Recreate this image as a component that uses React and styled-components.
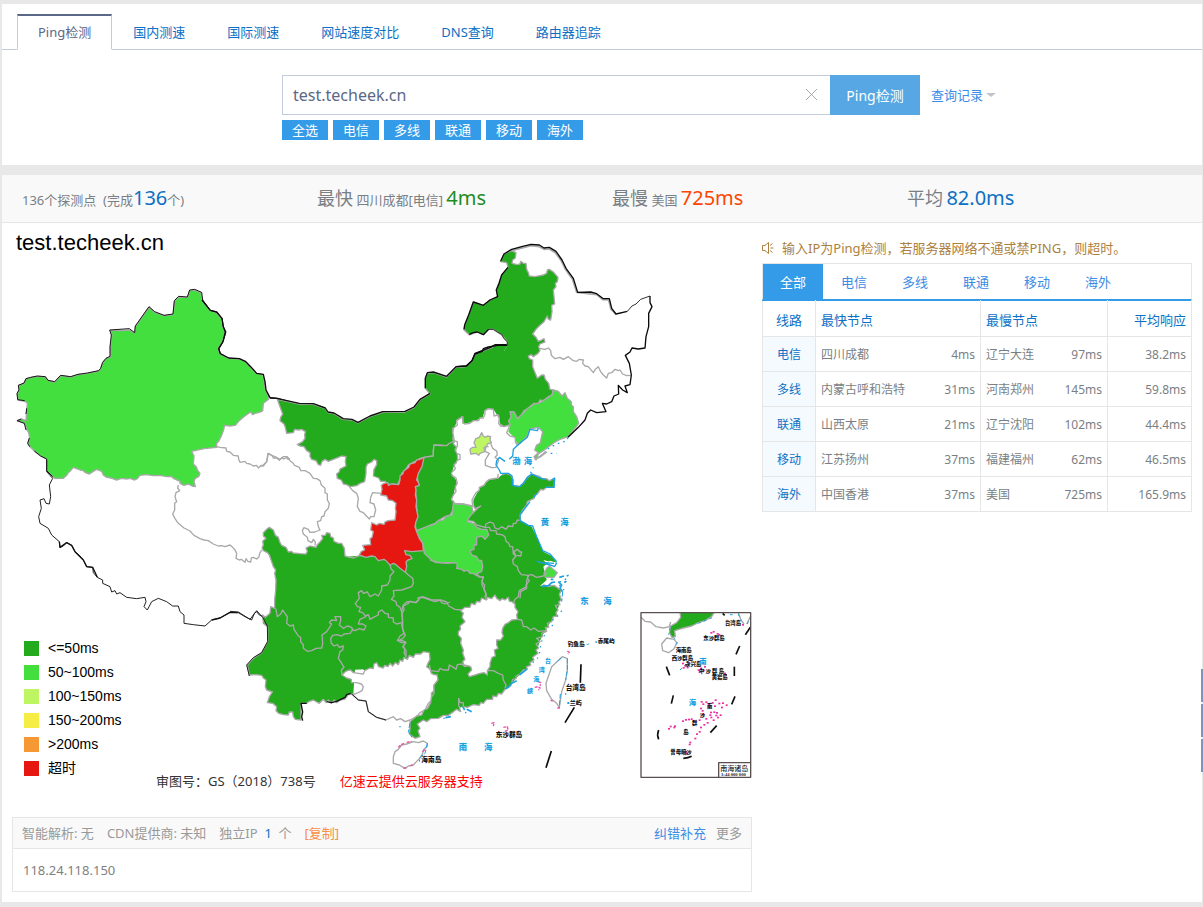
import React, { useState } from "react";
import styled, { createGlobalStyle } from "styled-components";

const GlobalStyle = createGlobalStyle`
  * {
    box-sizing: border-box;
  }
  body {
    margin: 0;
    background: #e8e8e8;
    color: #7a7f85;
    font-family: "Noto Sans", "Noto Sans CJK SC", sans-serif;
    font-size: 13px;
    line-height: 20px;
  }
  button, input {
    font-family: inherit;
  }
  a {
    text-decoration: none;
  }
`;

const Page = styled.div`
  display: flex;
  flex-direction: column;
  gap: 10px;
  padding: 4px 1px 5px 2px;
`;

const Panel = styled.section`
  background: #fff;
`;

const Nav = styled.nav`
  display: flex;
  padding: 10px 15px 0;
  border-bottom: 1px solid #c3cbdc;
`;

const NavTab = styled.a`
  height: 36px;
  margin-bottom: -1px;
  padding: 6px 20px 0;
  border: 1px solid ${({ $active }) => ($active ? "#c3cbdc" : "transparent")};
  border-top: 2px solid ${({ $active }) => ($active ? "#5b6887" : "transparent")};
  border-bottom-color: ${({ $active }) => ($active ? "#fff" : "transparent")};
  color: ${({ $active }) => ($active ? "#5b6887" : "#0c70c4")};
  white-space: nowrap;
`;

const SearchArea = styled.div`
  display: grid;
  grid-template-columns: 1fr minmax(0, 638px) 1fr;
  padding: 25px 2px 25px 0;
`;

const SearchForm = styled.form`
  grid-column: 2;
`;

const SearchBar = styled.div`
  display: flex;
  height: 40px;
`;

const InputBox = styled.div`
  display: flex;
  flex: 1;
  align-items: center;
  border: 1px solid #c3cbdc;
  border-right: 0;
`;

const HostInput = styled.input`
  flex: 1;
  min-width: 0;
  padding: 0 10px;
  border: 0;
  outline: 0;
  background: none;
  color: #5b6887;
  font-size: 16px;
`;

const ClearButton = styled.button`
  display: flex;
  margin-right: 12px;
  padding: 0 0 2px;
  border: 0;
  background: none;
`;

const SubmitButton = styled.button`
  width: 90px;
  padding: 0;
  border: 0;
  background: #56a7e3;
  color: #fff;
  font-size: 14px;
`;

const LineRow = styled.div`
  display: flex;
  gap: 5px;
  padding: 5px 0 0;
`;

const LineButton = styled.button`
  width: 46px;
  height: 20px;
  padding: 0;
  border: 0;
  background: #349be9;
  color: #fff;
  font-size: 13px;
  line-height: 18px;
`;

const HistoryLink = styled.a`
  display: flex;
  align-items: center;
  gap: 3px;
  height: 40px;
  padding-left: 11px;
  color: #3c8ce6;
`;

const Caret = styled.span`
  border: 5px solid transparent;
  border-top: 4px solid #c0c4cc;
  border-bottom: 0;
`;

const Stats = styled.div`
  display: grid;
  grid-template-columns: repeat(4, 1fr);
  height: 48px;
  padding-left: 20px;
  border-bottom: 1px solid #e6e6e6;
  background: #f9f9f9;
  line-height: 46px;
`;

const StatName = styled.span`
  font-size: 18px;
`;

const StatValue = styled.span`
  color: ${({ $color }) => $color};
  font-size: 20px;
`;

const Columns = styled.div`
  display: grid;
  grid-template-columns: 740fr 430fr;
  gap: 10px;
  align-items: start;
  padding: 0 10px 10px;
`;

const MapBox = styled.div`
  position: relative;

  svg {
    display: block;
    width: 100%;
  }
`;

const MapTitle = styled.h1`
  position: absolute;
  top: 8px;
  left: 4px;
  margin: 0;
  color: #000;
  font: 22px/24px "Liberation Sans", Arial, sans-serif;
`;

const Legend = styled.ul`
  position: absolute;
  bottom: 37px;
  left: 12px;
  margin: 0;
  padding: 0;
  list-style: none;
  color: #000;
  font: 14px/24px "Liberation Sans", "Noto Sans CJK SC", sans-serif;
`;

const LegendItem = styled.li`
  display: flex;
  align-items: center;
  gap: 9px;
  height: 24px;

  &::before {
    content: "";
    width: 15px;
    height: 15px;
    background: ${({ $color }) => $color};
  }
`;

const MapNote = styled.div`
  position: absolute;
  bottom: 26px;
  left: 144px;
  display: flex;
  gap: 24px;
  color: #333;

  a {
    color: #f00;
  }
`;

const IpBox = styled.div`
  border: 1px solid #e6e6e6;
`;

const IpHead = styled.div`
  display: flex;
  gap: 13px;
  padding: 5px 9px;
  border-bottom: 1px solid #e6e6e6;
  background: #f9f9f9;
  color: #999;

  b {
    color: #0c70c4;
    font-weight: 400;
  }
`;

const CopyButton = styled.button`
  padding: 0;
  border: 0;
  background: none;
  color: #f78f47;
  font-size: 13px;
  line-height: 18px;
`;

const IpLinks = styled.div`
  display: flex;
  gap: 10px;
  margin-left: auto;

  a {
    color: #3c8ce6;
  }
  a + a {
    color: #999;
  }
`;

const IpAddress = styled.div`
  padding: 11px 10px;
  color: #7f7f7f;
`;

const Notice = styled.p`
  display: flex;
  align-items: center;
  gap: 8px;
  margin: 0;
  padding: 15px 0 5px;
  color: #ac8040;
`;

const LineTabs = styled.div`
  display: flex;
  gap: 1px;
  border: 1px solid #e6e6e6;
  border-bottom: 1px solid #349be9;
`;

const LineTab = styled.button`
  width: 60px;
  height: 35px;
  padding: 0;
  border: 0;
  background: ${({ $active }) => ($active ? "#349be9" : "none")};
  color: ${({ $active }) => ($active ? "#fff" : "#3c8ce6")};
  font-size: 13px;
`;

const Table = styled.table`
  width: 100%;
  border-collapse: collapse;
  table-layout: fixed;
  font-size: 12px;

  th, td {
    height: 35px;
    padding: 2px 5px 0;
    border: 1px solid #e6e6e6;
    font-weight: 400;
    text-align: left;
  }
  thead th {
    height: 36px;
    border-top-color: #349be9;
    color: #0c70c4;
    font-size: 13px;
  }
  tr > th:first-child {
    text-align: center;
  }
  tbody th {
    background: #f5faff;
    color: #0c70c4;
  }
  tr > :last-child {
    text-align: right;
  }
`;

const Node = styled.div`
  display: flex;
  justify-content: space-between;
`;

const SideTools = styled.aside`
  position: fixed;
  top: 669px;
  right: 0;
  display: grid;
  gap: 2px;
`;

const SideTool = styled.span`
  width: 2px;
  height: 33px;
  background: #8093bd;
`;

const GREEN = "#24aa1d";
const LIGHT = "#43df3f";

const navTabs = ["Ping检测", "国内测速", "国际测速", "网站速度对比", "DNS查询", "路由器追踪"];
const lines = ["电信", "多线", "联通", "移动", "海外"];

const legend = [
  [GREEN, "<=50ms"],
  [LIGHT, "50~100ms"],
  ["#bef663", "100~150ms"],
  ["#f6ed44", "150~200ms"],
  ["#f69833", ">200ms"],
  ["#e61610", "超时"],
];

const rows = [
  ["电信", "四川成都", "4ms", "辽宁大连", "97ms", "38.2ms"],
  ["多线", "内蒙古呼和浩特", "31ms", "河南郑州", "145ms", "59.8ms"],
  ["联通", "山西太原", "21ms", "辽宁沈阳", "102ms", "44.4ms"],
  ["移动", "江苏扬州", "37ms", "福建福州", "62ms", "46.5ms"],
  ["海外", "中国香港", "37ms", "美国", "725ms", "165.9ms"],
];

// [x, y] of the small reefs in the south sea inset
const reefs = [
  [243, 98], [250, 95], [262, 101], [267, 104], [338, 74], [158, 190], [165, 197], [172, 202], [177, 188],
  [160, 203], [205, 210], [212, 205], [220, 211], [208, 216], [224, 200], [284, 220], [287, 224], [214, 305],
  [219, 312], [212, 325], [217, 332], [228, 306], [236, 322], [247, 308], [256, 300], [254, 318], [267, 310],
  [278, 309], [289, 315], [275, 322], [242, 337], [252, 336], [260, 338], [271, 345], [258, 346], [240, 345],
  [250, 360], [263, 352], [228, 356], [232, 368], [222, 374], [212, 382], [208, 360], [184, 357], [176, 358],
  [167, 359], [158, 363], [196, 365], [134, 378], [132, 382], [121, 379], [116, 386], [208, 395], [200, 402],
  [195, 415], [180, 427], [178, 433], [167, 455], [170, 461], [218, 342], [235, 312], [243, 352],
];

const southDashes = [
  "M361 82L346 104", "M329 138L318 163", "M313 200V228", "M109 200L119 226", "M130 286L124 311",
  "M315 289L305 313", "M260 377L241 398", "M86 390Q80 404 86 418", "M160 475Q175 474 185 469",
];

function ChinaMap() {
  return (
    <svg viewBox="36 669 2220 1782" role="img" aria-label="Ping" fill="none" stroke="#a9a9a9" strokeWidth="4" strokeLinejoin="round">
      {/* 新疆 */}
      <g transform="translate(0 690)">
        <path fill={LIGHT} d="M165 745L158 740 140 722 140 687 122 678 103 663 90 650 84 640 89 624 86 608 80 598 75 580 52 572 64 567 78 572 80 540 82 520 74 514 54 510 52 490 58 480 56 466 72 460 78 447 92 443 112 439 136 441 144 452 164 456 182 437 212 441 234 434 262 430 296 423 302 416 308 398 318 386 332 380 331 350 336 315 331 301 360 302 388 300 404 309 406 290 447 232 464 247 492 257 519 254 524 212 536 201 562 203 569 182 582 180 603 188 606 210 630 241 648 248 664 265 668 290 676 306 667 335 655 356 659 371 686 385 718 387 734 394 752 412 768 430 788 434 793 455 796 480 806 500 806 508 790 520 788 543 776 548 765 550 758 554 752 546 740 554 730 562 718 572 706 586 690 588 674 586 670 602 664 618 656 634 650 640 650 652 612 656 575 664 582 678 580 702 590 712 592 720 600 730 596 740 586 745 582 754 586 770 576 768 565 762 552 766 540 760 540 754 520 745 514 739 500 740 480 736 460 737 440 734 420 736 412 746 404 750 390 745 380 747 364 745 350 750 336 745 318 741 310 735 305 724 290 718 280 724 268 732 256 728 250 722 240 720 230 716 220 712 212 722 205 728 200 736 190 745Z" />
        <path d="M650 650L660 652 678 654 680 664 690 666 700 676 715 678 716 688 720 697 735 694 740 700 750 702 760 708 770 706 775 714 784 706 790 708 800 695 802 682 805 670 816 676 820 684 830 684 838 691 846 682 850 687 860 683 864 688 870 685" />
        <path stroke="#151515" strokeWidth="3" d="M158 740L140 722 140 687 122 678 103 663 M89 650L83 640 88 624 M78 600L73 580 51 572 64 567 M78 552L80 535 M74 512L53 509 51 490 57 480 55 466 72 459 78 446 92 442 112 438 136 440 144 451 164 455 182 436 212 440 234 433 262 429 296 422 302 415 308 397 318 385 330 379 330 350 334 315 329 300 388 296 404 308 406 288 447 230 464 245 492 256 519 252 523 212 536 199 562 201 569 180 584 178 605 187 608 210 631 241 650 246 666 265 670 290 678 306 669 335 657 356 661 371" />
        <path stroke="#0a0a0a" strokeWidth="4" d="M606 210L631 241 650 246 666 265 670 290 676 306 669 335 656 356 661 371 686 384 718 386 736 394 752 410 770 430 790 433 795 455 798 480 810 503 832 505 870 516" />
      </g>

      {/* 西藏 青海 */}
      <g transform="translate(0 1380)">
        <path d="M535 75L533 84 539 92 528 98 525 110 530 125 524 130 524 150 518 162 525 176 535 190 552 204 570 213 582 226 600 236 612 240 625 242 640 252 655 258 665 257 675 260 690 255 698 262 705 270 710 280 708 295 718 300 724 298 735 307 738 296 744 304 752 306 754 294 760 292 770 297 777 290 779 280 785 270" />
        <path stroke="#222" strokeWidth="3" d="M140 0V35L158 55 148 75 152 110 148 132 138 130 132 116 120 120 124 145 116 170 120 190 145 205 155 225 178 245 180 262 190 258 200 248 215 256 225 275 240 288 250 300 260 320 278 322 280 338 292 352 308 360 308 370 330 380 335 396 345 392 350 402 360 398 380 412 410 416 435 412 438 425 432 440 442 450 455 425 475 415 500 425 518 438 535 438 540 455 552 465 552 490 580 494 615 498 635 480 660 474 690 457 715 458 735 470 755 480 763 460 770 455 778 465 790 470 790 490 803 495" />
        <path stroke="#111" strokeWidth="4" d="M178 245L180 262 200 248 215 256 225 275 250 300 260 320 278 322 292 352 M635 480L660 474 690 457 715 458" />
      </g>

      {/* 内蒙古 */}
      <g transform="translate(780 1020)">
        <path stroke={GREEN} strokeWidth="14" d="M734 34L590 290" />
        <path fill={GREEN} d="M578 305L568 314 558 317 540 315 522 315 520 330 520 348 505 350 492 352 480 355 470 362 458 368 445 375 436 390 425 400 420 418 412 435 398 432 385 434 375 424 362 424 356 414 340 408 342 388 350 374 350 362 342 358 335 366 322 372 318 382 318 400 314 425 300 430 290 437 270 440 260 434 250 432 244 420 232 415 230 402 238 395 240 387 250 382 258 378 256 365 258 350 245 348 235 352 220 358 205 364 195 358 186 364 182 376 175 374 168 362 155 358 150 350 150 338 140 332 132 320 120 318 112 314 128 305 135 295 134 285 136 275 125 268 115 270 104 268 100 278 80 280 76 262 72 252 60 242 62 232 68 222 60 200 52 178 118 192 160 193 196 206 204 218 222 221 250 238 276 240 294 249 330 230 368 217 435 216 462 203 480 180 510 162 496 145 496 115 502 100 520 98 560 111 588 82 618 80 636 64 645 42 664 35 690 25 706 16 742 16" />
        <path stroke="#111" strokeWidth="4" d="M30 174L50 175 118 190 160 191 196 204 204 216 222 219 250 236 276 238 294 247 330 228 368 215 435 214 462 201 480 178 510 160 M496 145L496 115 502 98 520 96 560 109 588 80 618 78 636 62 645 40 664 33 690 23 706 14 742 14" />
      </g>
      <g transform="translate(1290 690)">
        <path fill={GREEN} d="M232 346L232 335 215 315 190 298 176 298 160 314 142 306 118 315 102 300 104 285 116 255 130 216 160 226 180 210 203 200 199 180 215 135 234 112 230 98 212 95 222 72 245 62 258 68 256 84 248 90 246 100 262 104 270 102 272 94 280 100 288 100 290 118 295 128 298 138 315 140 340 135 350 130 352 120 358 118 370 126 384 142 382 155 376 160 378 170 370 180 372 200 374 222 365 226 366 245 362 270 355 268 352 258 342 275 330 286 318 298 308 312 318 322 325 334 335 330 342 326 345 336 330 342 326 350 330 362 324 370 310 380 304 374 295 378 298 386 308 390 308 410 314 425 322 445 335 435 342 435 346 448 356 460 360 478 370 480 366 495 355 500 340 512 330 510 325 520 312 520 302 528 290 538 282 542 274 555 262 566 252 546 242 545 242 565 236 572 240 585 222 590 214 584 208 582 205 575 207 562 205 555 192 558 190 548 190 538 175 536 165 542 165 550 160 564 150 564 146 572 130 572 120 580 104 582 99 578 98 560 90 565 80 572 82 585 75 592 68 595 72 612 68 625 72 635" />
        <path fill={LIGHT} d="M370 480L385 484 396 498 405 488 412 505 424 515 424 525 430 530 430 545 440 560 446 580 434 596 414 620 390 628 372 638 350 655 325 672 318 690 312 680 325 668 314 660 320 645 330 640 338 605 325 592 300 597 290 620 270 640 258 642 255 622 240 618 230 607 236 594 240 585 237 572 243 562 240 545 252 546 262 566 274 555 290 538 312 522 325 520 340 512 366 495Z" />
        <path d="M330 355L345 358 355 354 362 362 364 376 375 386 390 382 400 388 415 380 430 392 440 394 448 388 460 390 458 400 465 408 475 410 490 428 496 418 505 410 512 425 520 435 530 444 535 430 545 428 555 418 565 422 570 420 578 432 590 437 602 436" />
        <path stroke="#a9a9a9" strokeWidth="5" d="M245 62L280 53 303 47 328 50 342 58 358 57 376 68 394 93 406 118 427 147 440 187 500 194 518 209 536 210 543 238 558 253" />
        <path stroke="#0a0a0a" strokeWidth="4" d="M203 346L175 351 160 356 157 364 135 372 126 392 110 408 80 410 M232 346L203 346 M118 313L130 308 142 306 160 314 176 298 M102 298L104 285 116 255 130 216 160 226 180 210 203 200 199 180 208 158 215 135 234 112 M212 94L222 72 245 58 278 49 303 43 328 45 342 54 358 52 378 64 396 90 408 115 430 145 443 187 482 186 500 191 520 206 538 206 545 235 558 252 592 244" />
        <path stroke="#333" strokeWidth="3" d="M176 298L190 298 202 306 215 313 222 326 232 335 232 346 M592 244L606 228 618 222 632 208 660 198" />
        <path stroke="#0a0a0a" strokeWidth="4" d="M660 198L660 218 666 230 656 250 656 290 648 320 645 354 625 357 606 354 600 366 586 376 598 400 604 435 600 464 585 468 592 488 578 480 565 466 566 492 552 498 545 515 530 522 517 520 528 545 500 548 482 540 472 550 465 570 445 592 414 622" />
      </g>

      {/* 甘肃 宁夏 */}
      <g transform="translate(780 1020)">
        <path d="M0 380L10 375 20 365 22 355 24 340 32 345 45 350 60 358 70 350 82 350 90 362 98 368 104 376 118 382 122 392 135 392 150 400 160 415 170 416 180 422 184 435 195 445 195 458 202 462 202 480 208 490 205 505 195 515 192 528 185 530 182 542 172 545 175 560 180 570 165 576 150 577 145 568 132 563 127 572 130 582 142 592 144 602 155 608 160 598 166 606 165 616 M268 440L278 452 290 460 295 475 292 500 300 514 310 518 328 537 332 530 342 530 347 510 342 492 330 488 332 472 338 458 362 460" />
      </g>

      {/* 南方各省 */}
      <g stroke="none" fill={GREEN}>
        <path transform="translate(690 1560)" d="M350 110L600 90V440L350 450Z" />
        <path transform="translate(1140 1710)" d="M-50 -45L100 -60 130 -140 310 -140 420 -150 455 -130 475 -90 490 -55 515 -42 530 -22 510 -28 490 -10 500 30 480 48 510 44 540 60 536 110 515 150 485 200 468 245 440 290 395 340 350 374 260 405 172 440 100 300 -50 300Z" />
      </g>
      <g transform="translate(690 1560)">
        <path fill={GREEN} d="M398 105L385 108 372 114 358 112 345 108 343 85 335 70 325 70 312 64 310 54 302 50 300 40 290 38 286 46 275 46 278 56 270 66 262 74 258 82 240 78 228 84 232 94 228 102 210 101 190 99 184 94 175 96 168 82 155 76 150 68 145 52 136 46 130 30 118 22 110 28 100 38 100 48 108 55 98 64 100 74 96 84 100 92 112 98 118 105 125 125 130 140 137 150 134 160 138 180 137 210 134 240 134 265 122 260 120 280 106 292 98 285 102 312 113 320 113 365 95 398 70 415 52 435 58 465 78 464 95 466 100 474 108 480 106 500 110 510 127 516 118 530 112 548 128 550 140 560 138 572 146 580 160 584 175 585 178 576 188 576 190 590 196 598 213 600 213 550 230 550 238 544 250 540 260 546 268 550 280 538 288 548 295 540 304 550 312 540 320 548 330 540 345 537 355 524 370 522" />
        <path fill="#fff" d="M336 465L345 456 352 452 362 450 370 458 385 460 400 462 404 452 420 444 430 446 432 432 440 428 446 440 460 444 464 436 474 440 480 430 488 438 496 428 505 434 510 420 518 424 522 412 532 418 538 406 550 412 556 402 572 402 580 395 598 398 600 418 594 430 590 440 600 448 604 460 612 464 622 465 624 480 612 496 612 512 604 520 605 540 594 552 585 570 570 578 560 590 540 600 525 605 512 596 500 600 490 590 468 600 440 592 415 575 408 543 385 540 368 524 385 518 396 512 400 500 394 492 380 488 364 488 364 478 350 474Z" />
        <path stroke="#222" strokeWidth="3" d="M0 274L25 276 60 298 80 272 98 292 112 318 113 365 95 398 70 413 50 435 58 468 M365 522L385 540 408 543 415 575 440 592 468 600" />
        <path stroke="#111" strokeWidth="4" d="M218 602L215 590 218 576 213 550 230 550 M290 545L304 548 320 544 345 532 350 524 362 520" />
        <path d="M137 265L142 290 152 282 158 270 166 282 172 290 170 310 180 318 190 315 192 328 200 340 205 348 212 352 212 365 220 375 220 385 232 394 245 392 258 385 275 384 278 370 276 345 290 335 300 320 305 312 298 308 305 300 320 302 315 290 332 290 332 302 328 315 340 325 352 318 365 322 368 330 360 340 342 342 335 348 320 344 308 346 302 356 304 370 312 378 322 374 328 382 340 378 338 390 330 395 325 415 332 425 342 442 334 450 336 465" />
        <path d="M480 135L484 148 492 155 480 168 480 180 472 195 455 198 455 210 445 228 435 222 420 230 412 216 400 220 395 212 385 218 388 235 376 250 382 260 392 262 387 275 398 278 408 290 390 298 385 312 398 312 408 318 402 330 388 326 375 332 365 328 M405 288L415 284 420 298 430 292 445 285 445 276 455 270 465 280 475 282 475 292 490 294 490 306 500 312 515 308" />
        <path d="M525 155L535 165 548 175 550 190 545 200 515 210 490 212 492 228 484 238 498 245 500 255 510 262 515 275 518 310 518 330 526 345 518 356 505 362 514 368 526 366 520 378 525 388 522 398 528 410 M515 275L518 262 520 255 530 246 540 244 555 248 565 240 564 234 578 230 605 240 630 240 635 248 645 252 660 246" />
        <path d="M490 710L490 730 508 735 525 745 535 738 550 735 562 722 572 712 578 700 580 690 592 678 592 670 580 663 565 668 550 665 530 672 515 675 505 688 495 695Z" />
      </g>
      <g transform="translate(1140 1710)">
        <path fill="#fff" stroke="none" d="M528 -20L490 -30 505 -14 500 8 512 22 485 48 515 44 560 62 600 0 560 -30Z" />
        <path fill={GREEN} d="M490 44L505 50 522 46 545 62 538 72 544 90 536 96 540 104 526 106 534 120 528 128 532 138 520 140 515 155 502 160 506 172 496 172 500 184 485 190 488 200 470 205 480 215 468 222 476 234 468 240 474 250 458 262 462 270 450 278 452 286 440 290 442 298 430 300 420 312 408 318 408 326 398 328 392 348 375 358 365 372 355 370 350 380 338 378 338 388 320 388 310 400 302 398 298 406 280 404 262 412 250 410 250 398 240 398 236 385 236 405 242 425 230 418 222 424 205 436 190 436 175 445 152 446 140 455 130 450 112 462 120 475 114 482 120 500 105 505 88 492 90 475 90 455 110 438 125 435 132 420 142 416 152 398 154 382 162 370 162 345 174 330 172 318" />
        <path fill="#fff" d="M345 75L350 85 360 92 366 86 375 90 385 82 388 94 395 95 405 102 405 112 414 125 410 135 412 148 395 150 385 158 375 163 368 175 366 188 370 198 362 210 350 210 350 225 354 235 343 240 346 258 336 262 330 280 330 290 322 302 322 315 312 308 300 310 285 315 268 320 264 312 275 300 272 290 262 287 252 285 248 275 255 268 248 250 250 240 242 220 244 205 235 195 235 185 242 178 240 168 255 155 246 142 250 130 242 122 255 112 270 112 274 100 285 104 290 94 300 96 305 84 318 90 322 82 335 86Z" />
        <path d="M65 165L68 150 66 130 72 120 70 108 85 100 90 94 108 98 116 90 118 84 128 82 145 88 165 95 182 90 200 96 206 108 225 118 245 120 M65 165L72 190 60 198 52 212 68 212 78 218 68 230 78 242 78 260 M148 285L152 302 175 305 180 295 190 300 205 300 208 285 220 292 228 298 232 284 245 282 255 290 262 288 M290 12L300 22 310 20 306 35 306 45 314 60 320 80" />
        <path d="M400 100L405 88 415 80 418 62 440 50 440 32 446 15 M412 148L425 150 430 170 440 170 452 180 462 174 475 184 500 182 M322 302L340 302 355 310 368 315 370 330 378 345 375 355" />
        <path fill={LIGHT} d="M500 -5L508 -12 532 8 522 22 496 22 492 10Z" />
        <path fill="#fff" d="M547 260L562 266 562 300 557 330 545 365 541 392 538 412 530 400 515 388 500 362 498 340 515 290Z" />
        <path stroke="#1ba1e2" strokeWidth="3" strokeDasharray="14 5" d="M562 266L562 300 557 330 M541 372L538 412 M545 262L530 276 M142 520L135 550 120 562 118 575 M90 460L85 485 96 502 M548 66L545 95" />
        <path stroke="#1ba1e2" strokeWidth="4" strokeDasharray="4 14" d="M545 122L530 142 518 150 517 170 M494 195L486 210 482 225 477 260 473 264 453 283 M190 445L212 440 M255 428L272 426 M58 470H63 M555 372H560" />
        <path stroke="#1ba1e2" strokeWidth="5" d="M375 356L385 352 395 340 410 332 M418 315L440 298 M196 443L212 440 M248 410L254 420 M260 418L275 425 M485 49L505 47 515 38 525 36 M538 22L552 18 M535 35L545 45 540 55 548 65 M552 36H558 M512 28H520 M560 18L566 16" />
        <path stroke="#ee4fa6" strokeWidth="4" d="M334 460L342 458 340 468 M370 472L382 470 384 480 374 484 M562 243L568 247 564 252 M475 335L482 338 480 348 M464 352L474 350 482 355 M475 360L478 358 M512 390L518 394 M532 414L540 414 M55 532L62 525 72 520 M80 517L95 514 M128 545L135 538 M92 588L98 584 M70 594H80" strokeDasharray="9 3" />
        <path stroke="#0a0a0a" strokeWidth="5" d="M603 283L601 338 M583 412L555 458 M514 543L498 593" />
      </g>

      {/* 山西 陕西 河南 */}
      <g transform="translate(780 1020)">
        <path fill={GREEN} d="M492 352L520 348 520 335 522 315 540 317 560 317 568 310 584 303 580 312 590 322 600 324 598 335 592 345 594 370 582 382 585 394 575 398 578 408 590 418 590 435 584 450 585 462 578 472 582 490 578 512 570 526 555 530 535 542 525 550 510 556 490 566 468 572 465 545 472 530 470 500 468 470 466 440 476 436 470 400 480 385Z" />
        <path fill={LIGHT} d="M580 490L576 525 560 528 550 540 535 542 525 552 510 556 470 572 470 582 490 612 493 640 512 658 525 666 560 670 585 668 592 672 590 685 605 688 612 694 622 690 630 700 640 700 650 707 655 698 665 695 668 680 665 662 655 660 650 650 635 645 630 632 642 628 642 615 650 615 650 592 665 588 675 598 686 585 680 568 665 568 650 562 640 550 622 545 632 530 640 518 635 498 610 492Z" />
        <path fill="#e61610" d="M492 352L480 358 470 360 465 368 450 372 446 382 432 392 428 402 420 408 420 420 416 434 395 432 385 436 384 428 372 430 364 436 366 448 362 465 380 468 385 480 398 482 408 490 406 505 408 515 405 540 385 542 376 545 372 553 358 550 350 555 335 548 332 570 340 575 336 592 330 596 332 614 308 616 314 630 304 634 298 645 318 652 335 648 345 650 355 662 372 658 380 664 390 675 400 670 408 674 420 685 436 697 440 680 438 665 444 660 456 656 450 646 438 644 434 632 455 635 490 632 488 610 478 595 470 575 465 560 468 545 474 530 468 500 470 480 466 465 468 450 466 440 478 436 474 425 470 420 475 400 486 380Z" />
      </g>

      {/* 山东 河北 京津 江苏 */}
      <g transform="translate(1290 1200)">
        <path fill={GREEN} d="M130 316L126 302 130 295 138 278 148 270 148 262 162 256 168 246 178 238 204 234 206 226 216 224 228 220 242 225 250 240 250 256 268 260 280 250 290 235 305 222 330 230 335 236 350 236 358 242 374 236 372 262 350 262 340 270 332 268 322 282 314 286 312 295 292 305 290 315 278 330 270 345 272 362 262 360 258 370 250 370 248 380 235 378 228 388 215 380 205 388 195 384 190 370 180 366 168 372 165 382 140 375 130 364 112 362 120 348 140 328 152 318 135 326Z" />
        <path stroke="none" fill="#fff" d="M82 62L95 52 98 72 130 65 158 52 165 30 190 28 208 55 210 78 240 78 235 95 255 115 262 135 248 165 215 178 230 210 205 234 180 238 150 262 130 300 130 318 66 300 82 245 65 220 75 190 90 175 78 155 82 130 70 115 70 90Z" />
        <path d="M70 85L68 98 72 115 70 122 82 125 82 140 75 148 80 160 90 164 90 178 82 180 78 190 72 194 76 206 64 218 66 226 78 234 82 250 76 260 78 275 70 285 64 298 75 312 100 312 128 318 126 300 132 288 138 278 148 270 148 262 162 256 168 246 178 238 204 234 204 222 M262 137L256 125 256 112 240 108 230 98 236 84 240 75 222 80 212 78 206 70 208 55 202 45 192 48 190 28 175 26 165 32 165 42 160 54 150 54 146 62 130 62 120 70 104 72 99 68 98 50 90 55 80 62 82 75 70 85" />
        <path fill="#bef663" d="M155 98L160 108 165 112 172 108 182 110 180 120 184 128 172 132 170 140 162 142 164 155 150 160 146 166 138 160 122 162 120 148 128 142 138 142 132 128 137 116 148 112Z" />
        <path d="M182 130L188 145 200 153 202 165 195 172 206 180 198 202 185 203 166 196 166 180 178 160 165 154 168 140 176 140" />
        <path d="M165 382L178 382 182 392 198 392 200 402 215 404 225 410 228 424 236 430 240 440 248 440 250 462 258 468 248 480 250 492 262 500 265 512 274 524 295 526 305 524 320 532 340 528 350 518 M258 468L252 455 262 448 270 456 275 456 272 468 260 466 M295 526L292 535 298 542 288 555 290 565 272 575 270 595" />
        <path d="M140 520L145 530 160 532 155 545 164 555 162 570 168 580 165 590 172 600 M0 480L20 488 75 488" />
        <path stroke="#1ba1e2" strokeWidth="4" d="M325 84L322 92 300 88 292 112 275 125 258 140 250 148 248 168 238 178 M225 184L208 172 200 182 198 195 208 210 212 220 235 220 246 228 248 256 268 260 280 250 292 232 305 222 325 232 345 238 M365 240L374 234 372 262 345 262 M320 280L312 292 M300 305L290 318 270 345 270 362 295 376 308 378 320 410 338 452 360 462 380 485 M320 484L350 492 376 500 M345 488L372 490 M380 488L375 498" />
        <path stroke="#1ba1e2" strokeWidth="4" strokeDasharray="5 12" d="M414 112L410 122 380 132 356 145 340 162 325 175 M362 160H380 M302 220L310 202 M405 540L412 530 M388 545H410 M388 555L402 570" />
        <path stroke="#a9a9a9" strokeWidth="6" d="M314 178L330 170 350 155" />
      </g>

      <g transform="translate(1140 1710)" stroke="none" fontFamily="Noto Sans CJK SC, sans-serif" fontWeight="900">
        <g fill="#111" fontSize="20">
          <text x="124" y="577">海南岛</text>
          <text x="347" y="501">东沙群岛</text>
          <text x="557" y="360">台湾岛</text>
          <text x="569" y="405" fontSize="18">兰屿</text>
          <text x="563" y="227" fontSize="17">钓鱼岛</text>
          <text x="653" y="220" fontSize="17">赤尾屿</text>
        </g>
        <g fill="#1ba1e2" fontSize="25">
          <text x="601" y="103">东</text>
          <text x="670" y="103">海</text>
          <text x="236" y="540">南</text>
          <text x="312" y="540">海</text>
          <text x="397" y="-317">渤</text>
          <text x="431" y="-319">海</text>
          <text x="482" y="-134">黄</text>
          <text x="541" y="-134">海</text>
        </g>
        <g fill="#1ba1e2" fontSize="18">
          <text x="495" y="279">台</text>
          <text x="476" y="306">湾</text>
          <text x="460" y="334">海</text>
          <text x="441" y="369">峡</text>
        </g>
        <path fill="#1ba1e2" d="M618 224l8-4v4zM646 214h5v4h-5zM562 396h6v6h-6z" />
      </g>

      {/* 南海诸岛 */}
      <g transform="translate(1890 1800)">
        <path fill={GREEN} d="M150 38L152 52 140 68 122 78 118 98 126 112 136 110 134 92 160 84 185 78 205 68 225 62 245 50 252 38" />
        <path d="M33 52L45 64 62 66 78 80 100 84 118 80 122 66 M110 114L132 118 140 128 132 146 116 158 98 152 95 132Z M325 38L333 60 342 72 M350 72L362 48" />
        <path stroke="#1ba1e2" strokeWidth="3" strokeDasharray="8 10" d="M130 112L142 126 136 144 M120 82L116 104 M205 70L250 52 M325 42L333 62 M352 72L362 50 M150 210L168 192 M300 44H312" />
        <g stroke="none" fill="#ee2fa0">
          {reefs.map(([x, y]) => <rect key={x + "-" + y} x={x - 2} y={y - 2} width="6" height="5" />)}
        </g>
        <g stroke="#111" strokeWidth="5">
          {southDashes.map((d) => <path key={d} d={d} />)}
          <path d="M278 40L284 46" />
        </g>
        <g stroke="none" fill="#111" fontFamily="Noto Sans CJK SC, sans-serif" fontWeight="900" fontSize="16">
          <text x="285" y="75">台湾岛</text>
          <text x="220" y="121">东沙群岛</text>
          <text x="137" y="157">海南岛</text>
          <text x="125" y="179">西沙群岛</text>
          <text x="166" y="199">永兴岛</text>
          <text x="207" y="218">中 沙 群 岛</text>
          <text x="245" y="238">黄岩岛</text>
          <text x="231" y="324">南</text>
          <text x="209" y="351">沙</text>
          <text x="186" y="376">群</text>
          <text x="160" y="403">岛</text>
          <text x="121" y="461">曾母暗沙</text>
          <text x="208" y="193" fontSize="22" fill="#1ba1e2">南</text>
          <text x="176" y="316" fontSize="22" fill="#1ba1e2">海</text>
        </g>
        <path stroke="#594f4f" strokeWidth="4" fill="#fff" d="M266 532V488H362" />
        <path stroke="#594f4f" strokeWidth="4" d="M33 38H362V532H33Z" />
        <g stroke="none" fill="#222">
          <text x="271" y="513" fontSize="21" fontFamily="Noto Sans CJK SC, sans-serif" fontWeight="500">南海诸岛</text>
          <text x="273" y="529" fontSize="14" fontFamily="Liberation Serif, serif" fontWeight="700">1:44 000 000</text>
        </g>
      </g>
    </svg>
  );
}

function App() {
  const [host, setHost] = useState("test.techeek.cn");
  const [line, setLine] = useState("全部");

  return (
    <>
      <GlobalStyle />
      <Page>
        <Panel>
          <Nav>
            {navTabs.map((name, i) => (
              <NavTab key={name} href="#" $active={i === 0}>{name}</NavTab>
            ))}
          </Nav>
          <SearchArea>
            <SearchForm onSubmit={(e) => e.preventDefault()}>
              <SearchBar>
                <InputBox>
                  <HostInput aria-label="域名或IP" value={host} onChange={(e) => setHost(e.target.value)} />
                  <ClearButton type="button" aria-label="清空" onClick={() => setHost("")}>
                    <svg width="13" height="13" viewBox="0 0 13 13" stroke="#a8a8a8">
                      <path d="M1 1L12 12M12 1L1 12" />
                    </svg>
                  </ClearButton>
                </InputBox>
                <SubmitButton type="submit">Ping检测</SubmitButton>
              </SearchBar>
              <LineRow>
                {["全选", ...lines].map((name) => (
                  <LineButton key={name} type="button">{name}</LineButton>
                ))}
              </LineRow>
            </SearchForm>
            <HistoryLink href="#">查询记录<Caret /></HistoryLink>
          </SearchArea>
        </Panel>

        <Panel>
          <Stats>
            <div>136个探测点&nbsp; (完成<StatValue $color="#0c70c4">136</StatValue>个)</div>
            <div><StatName>最快</StatName> 四川成都[电信] <StatValue $color="#1f8c1f">4ms</StatValue></div>
            <div><StatName>最慢</StatName> 美国 <StatValue $color="#ff4500">725ms</StatValue></div>
            <div><StatName>平均</StatName> <StatValue $color="#0c70c4">82.0ms</StatValue></div>
          </Stats>
          <Columns>
            <div>
              <MapBox>
                <ChinaMap />
                <MapTitle>test.techeek.cn</MapTitle>
                <Legend>
                  {legend.map(([color, text]) => (
                    <LegendItem key={text} $color={color}>{text}</LegendItem>
                  ))}
                </Legend>
                <MapNote>
                  <span>审图号：GS（2018）738号</span>
                  <a href="#">亿速云提供云服务器支持</a>
                </MapNote>
              </MapBox>
              <IpBox>
                <IpHead>
                  <span>智能解析: 无</span>
                  <span>CDN提供商: 未知</span>
                  <span>独立IP&nbsp; <b>1</b>&nbsp; 个</span>
                  <CopyButton type="button">[复制]</CopyButton>
                  <IpLinks>
                    <a href="#">纠错补充</a>
                    <a href="#">更多</a>
                  </IpLinks>
                </IpHead>
                <IpAddress>118.24.118.150</IpAddress>
              </IpBox>
            </div>
            <div>
              <Notice>
                <svg width="12" height="12" viewBox="0 0 12 12" fill="none" stroke="#ac8040">
                  <path d="M.5 3.5H3L6.500 .5V11.500L3 8.500H.5ZM8 3.500L10.500 1.500M8.500 6H11.500M8 8.500L10.500 10.500" />
                </svg>
                输入IP为Ping检测，若服务器网络不通或禁PING，则超时。
              </Notice>
              <LineTabs>
                {["全部", ...lines].map((name) => (
                  <LineTab key={name} type="button" $active={name === line} onClick={() => setLine(name)}>
                    {name}
                  </LineTab>
                ))}
              </LineTabs>
              <Table>
                <colgroup>
                  <col width="53" />
                  <col />
                  <col width="127" />
                  <col width="84" />
                </colgroup>
                <thead>
                  <tr>
                    <th>线路</th>
                    <th>最快节点</th>
                    <th>最慢节点</th>
                    <th>平均响应</th>
                  </tr>
                </thead>
                <tbody>
                  {rows.map(([name, fast, fastMs, slow, slowMs, avg]) => (
                    <tr key={name}>
                      <th>{name}</th>
                      <td><Node><span>{fast}</span><span>{fastMs}</span></Node></td>
                      <td><Node><span>{slow}</span><span>{slowMs}</span></Node></td>
                      <td>{avg}</td>
                    </tr>
                  ))}
                </tbody>
              </Table>
            </div>
          </Columns>
        </Panel>
      </Page>
      <SideTools>
        <SideTool />
        <SideTool />
        <SideTool />
      </SideTools>
    </>
  );
}

export default App;
